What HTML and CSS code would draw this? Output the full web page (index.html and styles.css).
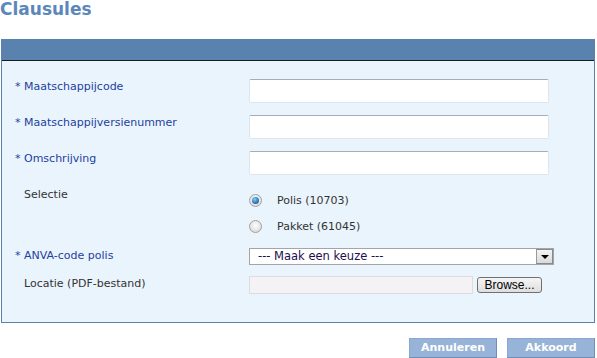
FILE: index.html
```html
<!DOCTYPE html>
<html lang="nl">
<head>
    <meta charset="UTF-8" />
    <title>Clausules</title>
    <link rel="stylesheet" href="styles.css">
</head>
<body>
    <h1 class="page-title">Clausules</h1>

    <div class="panel">
        <div class="panel-header"></div>
        <form class="panel-body">
            <div class="row">
                <label class="label required">* Maatschappijcode</label>
                <input class="text-input" type="text">
            </div>
            <div class="row">
                <label class="label required">* Maatschappijversienummer</label>
                <input class="text-input" type="text">
            </div>
            <div class="row">
                <label class="label required">* Omschrijving</label>
                <input class="text-input" type="text">
            </div>
            <div class="row row-radio">
                <label class="label">Selectie</label>
                <div class="radio-group">
                    <label class="radio-option"><input class="radio" type="radio" name="sel" checked><span>Polis (10703)</span></label>
                    <label class="radio-option"><input class="radio" type="radio" name="sel"><span>Pakket (61045)</span></label>
                </div>
            </div>
            <div class="row row-select">
                <label class="label required">* ANVA-code polis</label>
                <div class="select-wrap">
                    <select class="select">
                        <option>--- Maak een keuze ---</option>
                    </select>
                    <span class="select-arrow"></span>
                </div>
            </div>
            <div class="row row-file">
                <label class="label">Locatie (PDF-bestand)</label>
                <div class="file-wrap">
                    <span class="file-path"></span>
                    <button type="button" class="browse">Browse...</button>
                </div>
            </div>
        </form>
    </div>

    <div class="actions">
        <button type="button" class="action">Annuleren</button>
        <button type="button" class="action">Akkoord</button>
    </div>
</body>
</html>
```

FILE: styles.css
```css
body {
    margin: 0;
    padding: 0;
    font-family: "DejaVu Sans", Verdana, sans-serif;
    font-size: 11px;
    color: #333;
    background: #fff;
}

.page-title {
    margin: 0;
    height: 39px;
    font-size: 17px;
    font-weight: bold;
    line-height: 18px;
    color: #5b87bb;
}

.panel {
    margin-left: 1px;
    width: 592px;
    border: 1px solid #5a82ae;
    border-top: 0;
    background-color: #eaf4fd;
}

.panel-header {
    height: 21px;
    background-color: #5a82ae;
    border-bottom: 1px solid #1a1a1a;
}

.panel-body {
    margin: 0;
    padding: 18px 0 28px 13px;
    display: flex;
    flex-direction: column;
}

.row {
    display: flex;
    align-items: flex-start;
    margin-bottom: 12px;
}

.row-radio {
    margin-bottom: 11px;
}

.row-select {
    margin-bottom: 11px;
}

.row-file {
    margin-bottom: 0;
}

.label {
    width: 234px;
    flex: none;
    padding-top: 1px;
    line-height: 13px;
    padding-left: 9px;
    box-sizing: border-box;
}

.label.required {
    padding-left: 0;
    color: #2440a0;
}

.text-input {
    width: 300px;
    height: 24px;
    box-sizing: border-box;
    margin: 0;
    border: 1px solid #dfe5ec;
    border-top-color: #a6adb6;
    border-radius: 2px;
    background: #fff;
}

.radio-group {
    display: flex;
    flex-direction: column;
    gap: 2px;
}

.radio-option {
    display: flex;
    align-items: center;
    height: 24px;
    padding-top: 2px;
    box-sizing: border-box;
}

.radio-option span {
    margin-left: 15px;
}

.radio {
    appearance: none;
    -webkit-appearance: none;
    margin: 0;
    width: 13px;
    height: 13px;
    border-radius: 50%;
    border: 1px solid #a0a0a0;
    background: radial-gradient(circle at 50% 40%, #fdfdfd 0, #e4e4e4 60%, #cfcfcf 100%);
    box-sizing: border-box;
    position: relative;
}

.radio:checked::after {
    content: "";
    position: absolute;
    left: 2px;
    top: 2px;
    width: 7px;
    height: 7px;
    border-radius: 50%;
    background: radial-gradient(circle at 40% 35%, #8fd0f5 0, #2f82c2 50%, #1a4f86 100%);
}

.select-wrap {
    position: relative;
    width: 305px;
    height: 17px;
}

.select {
    appearance: none;
    -webkit-appearance: none;
    width: 100%;
    height: 17px;
    margin: 0;
    padding: 0 0 0 8px;
    border: 1px solid #a5a5a5;
    border-radius: 0;
    background: #fff;
    font-family: "DejaVu Sans", Verdana, sans-serif;
    font-size: 11.5px;
    line-height: 15px;
    color: #1c0f50;
}

.select-arrow {
    position: absolute;
    right: 1px;
    top: 1px;
    width: 15px;
    height: 13px;
    border: 1px solid #8a8a8a;
    border-left-color: #9a9a9a;
    background: linear-gradient(#f4f4f4, #dadada);
    pointer-events: none;
}

.select-arrow::after {
    content: "";
    position: absolute;
    left: 4px;
    top: 5px;
    border-left: 4px solid transparent;
    border-right: 4px solid transparent;
    border-top: 4px solid #000;
}

.file-wrap {
    display: flex;
    align-items: flex-start;
    gap: 4px;
}

.file-path {
    display: block;
    width: 224px;
    height: 18px;
    box-sizing: border-box;
    border: 1px solid #dcdde2;
    background: #f5f2f5;
}

.browse {
    margin-top: 1px;
    width: 65px;
    height: 16px;
    padding: 0;
    border: 1px solid #707070;
    border-radius: 3px;
    background: linear-gradient(#f5f5f5, #dedede);
    font-family: "Liberation Sans", Arial, sans-serif;
    font-size: 12px;
    line-height: 14px;
    color: #000;
}

.actions {
    display: flex;
    justify-content: flex-end;
    gap: 10px;
    margin-top: 15px;
    padding-right: 2px;
}

.action {
    width: 88px;
    height: 20px;
    padding: 0;
    border: 1px solid #8aa8cf;
    border-right-color: #6e8fb9;
    border-bottom-color: #6e8fb9;
    background-color: #97b3d7;
    color: #fff;
    font-family: "DejaVu Sans", Verdana, sans-serif;
    font-size: 11px;
    font-weight: bold;
    line-height: 18px;
}
```
